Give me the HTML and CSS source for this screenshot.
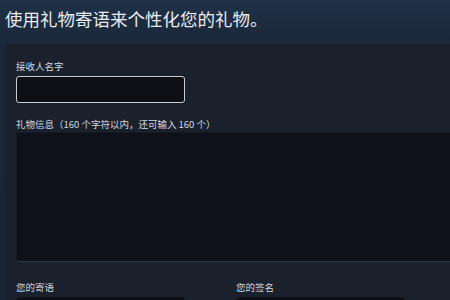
FILE: index.html
```html
<!DOCTYPE html>
<html lang="zh-CN">

<head>
    <meta charset="UTF-8">
    <meta name="viewport" content="width=device-width, initial-scale=1.0">
    <title>礼物寄语</title>
    <link rel="stylesheet" href="styles.css">
</head>

<body>
    <h1 class="page-title">使用礼物寄语来个性化您的礼物。</h1>

    <div class="gift-panel">
        <!-- Recipient -->
        <div class="form-group">
            <label for="recipient">接收人名字</label>
            <input type="text" id="recipient" class="text-input active">
        </div>

        <!-- Message -->
        <div class="form-group">
            <label for="message">礼物信息（160 个字符以内，还可输入 160 个）</label>
            <textarea id="message" class="message-box"></textarea>
        </div>

        <!-- Sentiment + signature -->
        <div class="form-row">
            <div class="form-group">
                <label for="sentiment">您的寄语</label>
                <input type="text" id="sentiment" class="text-input">
            </div>
            <div class="form-group">
                <label for="signature">您的签名</label>
                <input type="text" id="signature" class="text-input">
            </div>
        </div>
    </div>
</body>

</html>
```

FILE: styles.css
```css
html,
body {
    overflow: hidden;
}

body {
    margin: 0;
    height: 300px;
    font-family: "Noto Sans CJK SC", "Noto Sans", sans-serif;
    background: linear-gradient(to bottom, #1f3047 0%, #1b2739 45px, #1a2332 300px);
}

.page-title {
    margin: 0;
    padding: 6px 0 0 5px;
    height: 38px;
    box-sizing: border-box;
    font-size: 17.5px;
    font-weight: normal;
    color: #e8edf2;
}

.gift-panel {
    margin: 6px 0 0 5px;
    height: 256px;
    overflow: hidden;
    padding: 16px 0 0 11px;
    box-sizing: border-box;
    background-color: #1a202c;
}

.form-group {
    margin-bottom: 15px;
}

.form-group label {
    display: block;
    font-size: 9.5px;
    line-height: 12px;
    color: #d3dae2;
    margin-bottom: 4px;
}

.text-input {
    display: block;
    width: 169px;
    height: 27px;
    box-sizing: border-box;
    border: 1px solid #10131a;
    border-radius: 3px;
    background-color: #0e1016;
    color: #fff;
    outline: none;
}

.text-input.active {
    border-color: #c9ccd1;
}

.message-box {
    display: block;
    width: 480px;
    height: 130px;
    box-sizing: border-box;
    margin-top: -2px;
    border: 1px solid #141924;
    border-bottom-color: #2a3340;
    border-radius: 2px;
    background-color: #0e1119;
    resize: none;
    outline: none;
}

.form-row {
    display: flex;
    gap: 51px;
    margin-top: 19px;
}
```
